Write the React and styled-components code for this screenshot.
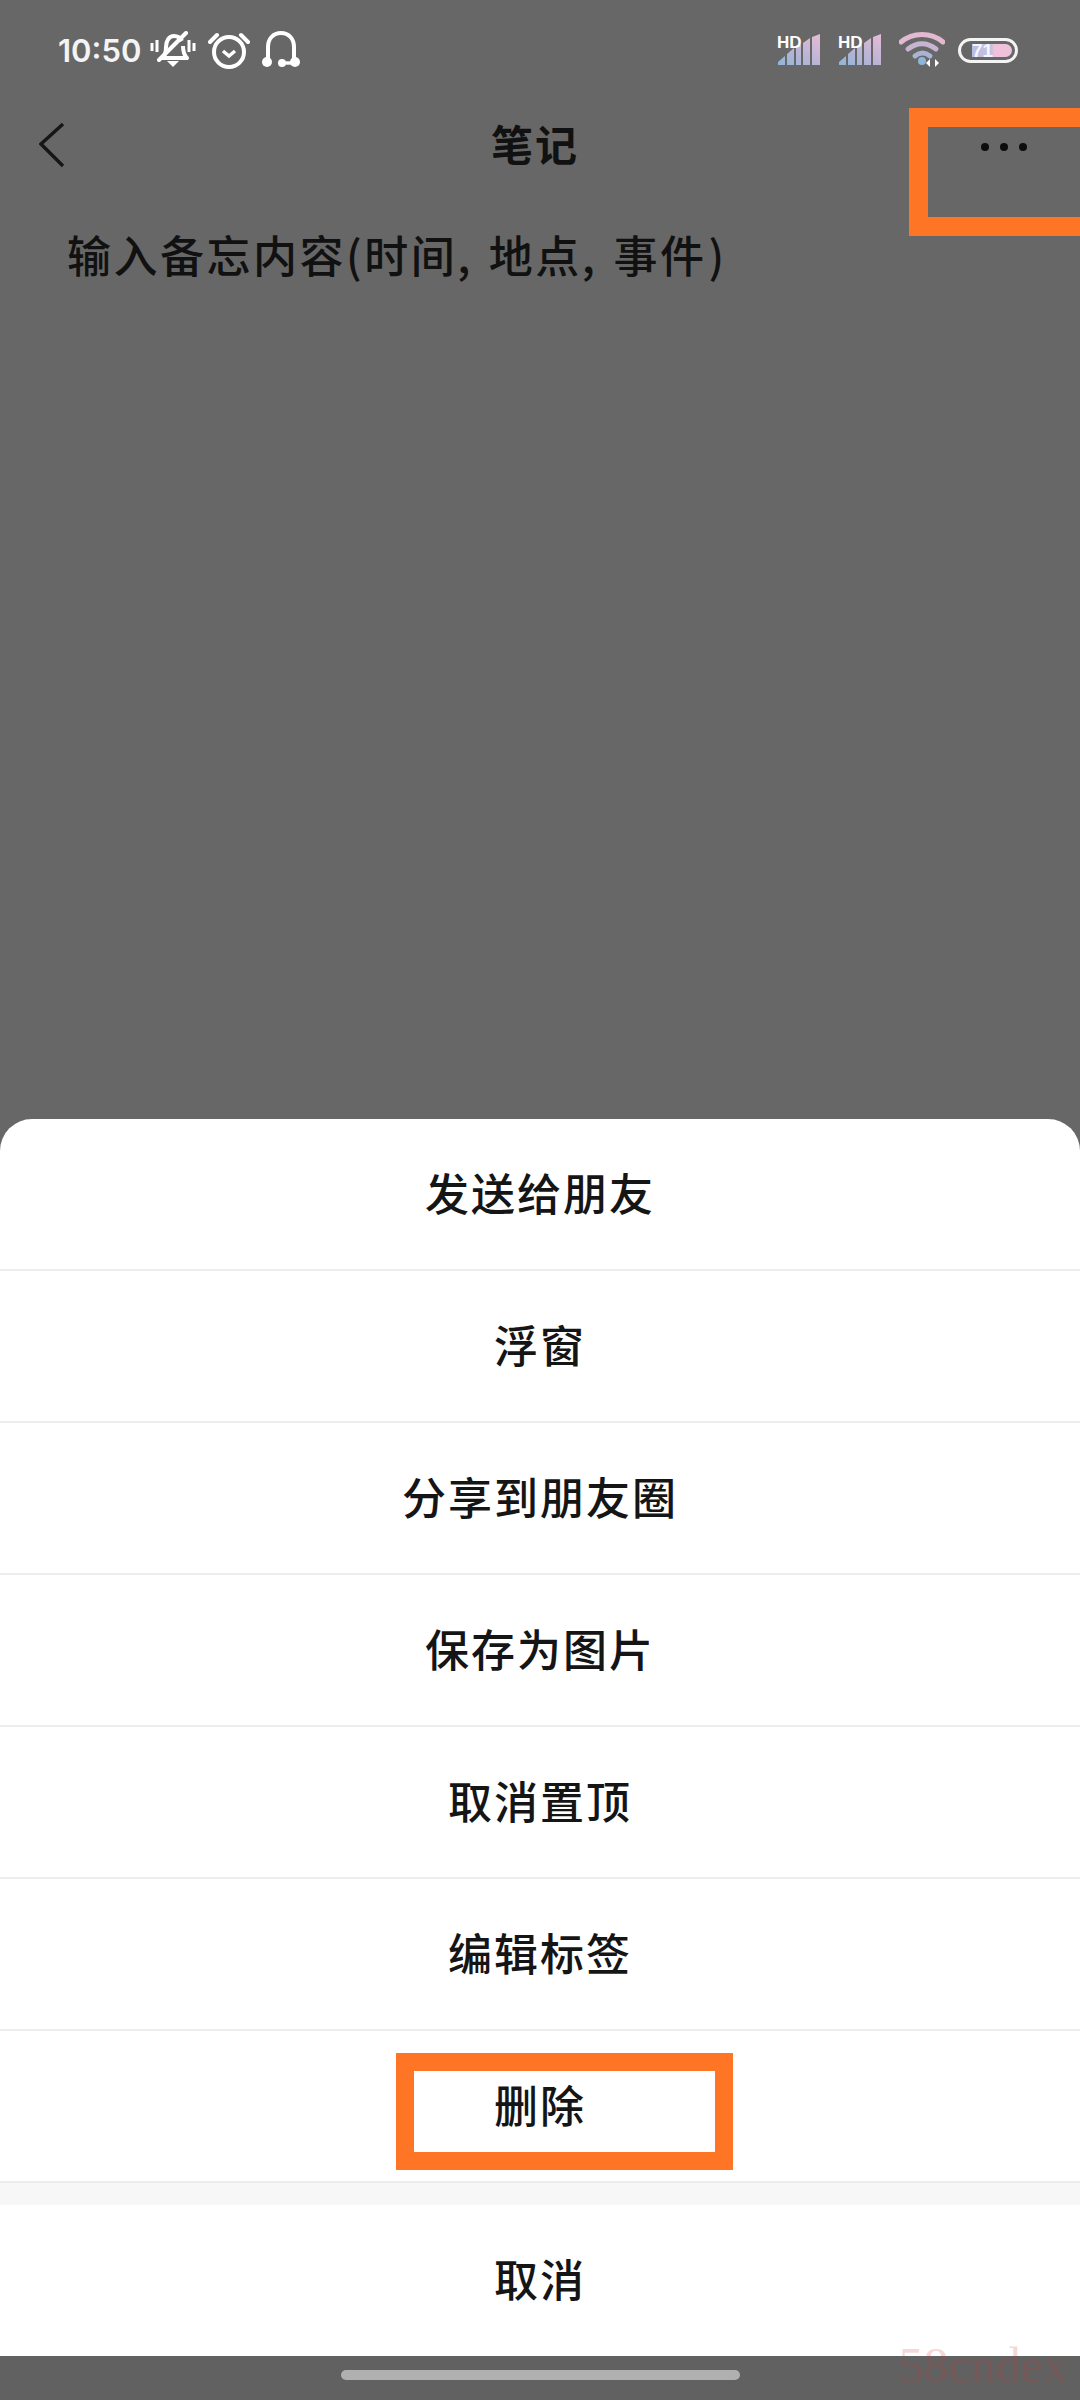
import React from 'react';
import styled, { createGlobalStyle } from 'styled-components';

const CJK = '"Noto Sans CJK SC", "Noto Sans", sans-serif';

const actions = ['发送给朋友', '浮窗', '分享到朋友圈', '保存为图片', '取消置顶', '编辑标签', '删除'];

const SignalIcon = ({ id }) => (
  <IconSvg width="44" height="32" viewBox="0 0 44 32">
    <defs>
      <linearGradient id={id} x1="0" x2="1" y1="1" y2="0">
        <stop offset="0" stopColor="#8fb6d8" />
        <stop offset="0.5" stopColor="#bdb4d6" />
        <stop offset="1" stopColor="#e6bcd6" />
      </linearGradient>
    </defs>
    <path
      fill={`url(#${id})`}
      d="M1 31v-3l7-6v9zM10 31V20l7-6v17zM19 31V14l5-4v21zM26 31V9l7-5v27zM35 31V3l8-3v31z"
    />
    <text x="0" y="14" fontFamily="Liberation Sans, sans-serif" fontWeight="700" fontSize="17" fill="#fff">HD</text>
  </IconSvg>
);

const App = () => (
  <Page>
    <GlobalStyle />
    <StatusBar>
      <Time>10:50</Time>
      <IconSvg width="46" height="38" viewBox="0 0 46 38" fill="none" stroke="#fff" strokeWidth="4">
        <path d="M2 12v8M7 9v12M39 9v12M44 12v8" strokeWidth="3" />
        <path d="M12 27c4-3 4-7 4-11 0-6 3-11 8-11 3 0 6 1 8 5M33 15c0 5 1 9 4 12H12" strokeLinejoin="round" />
        <path d="M9 29 36 2" strokeWidth="4" strokeLinecap="round" />
        <path d="M17 30h12l-6 6z" fill="#fff" stroke="none" />
      </IconSvg>
      <IconSvg width="42" height="38" viewBox="0 0 42 38" fill="none" stroke="#fff" strokeWidth="4">
        <circle cx="21" cy="21" r="15" />
        <path d="M15 20l6 5 6-5" strokeWidth="3.4" />
        <path d="M2 11 9 4M40 11l-7-7" strokeLinecap="round" />
      </IconSvg>
      <IconSvg width="38" height="38" viewBox="0 0 38 38" fill="none" stroke="#fff" strokeWidth="4">
        <path d="M6 30V16C6 8 11 2 19 2s13 6 13 14v14" />
        <circle cx="5" cy="31" r="5" fill="#fff" stroke="none" />
        <circle cx="33" cy="31" r="5" fill="#fff" stroke="none" />
        <circle cx="20" cy="32" r="4" fill="#fff" stroke="none" />
        <path d="M20 32h11" strokeWidth="3.4" />
      </IconSvg>
      <RightIcons>
        <SignalIcon id="sigA" />
        <SignalIcon id="sigB" />
        <IconSvg width="46" height="36" viewBox="0 0 46 36" fill="none" strokeLinecap="round">
          <path d="M2 10C14 0 32 0 44 10" stroke="#e3b9d2" strokeWidth="5" />
          <path d="M9 17c9-7 19-7 28 0" stroke="#c7b3d2" strokeWidth="5" />
          <path d="M16 24c5-4 10-4 15 0" stroke="#a9b4d4" strokeWidth="5" />
          <circle cx="23" cy="29" r="4" fill="#8fb6d8" />
          <path d="M31 27v8l-4-4zM36 35v-8l4 4z" fill="#fff" />
        </IconSvg>
        <Battery>
          <BatteryFill>71</BatteryFill>
        </Battery>
      </RightIcons>
    </StatusBar>

    <Header>
      <BackButton>
        <svg width="26" height="46" viewBox="0 0 26 46" fill="none" stroke="#161616" strokeWidth="3.4">
          <path d="M24 2 2 22l22 22" />
        </svg>
      </BackButton>
      <Title>笔记</Title>
      <MoreButton>
        <Dot />
        <Dot />
        <Dot />
      </MoreButton>
      <MoreHighlight />
    </Header>

    <NoteText>
      输入备忘内容(时间<Comma>,</Comma>地点<Comma>,</Comma>事件<CloseParen>)</CloseParen>
    </NoteText>

    <Spacer />

    <Sheet>
      {actions.map((label) => (
        <ActionRow key={label}>
          {label}
          {label === '删除' && <DeleteHighlight />}
        </ActionRow>
      ))}
      <SheetGap />
      <CancelRow>取消</CancelRow>
    </Sheet>

    <HomeStrip>
      <HomeBar />
    </HomeStrip>
    <Watermark>58cndex</Watermark>
  </Page>
);

const GlobalStyle = createGlobalStyle`
  html, body {
    margin: 0;
    padding: 0;
    background: #676767;
  }
`;

const Page = styled.div`
  position: relative;
  display: flex;
  flex-direction: column;
  width: 1080px;
  height: 2400px;
  overflow: hidden;
  background: #676767;
  font-family: ${CJK};
`;

const StatusBar = styled.div`
  display: flex;
  align-items: center;
  gap: 12px;
  height: 100px;
  padding: 0 62px 0 58px;
  box-sizing: border-box;
`;

const Time = styled.div`
  width: 80px;
  font-family: "Inter", "Liberation Sans", sans-serif;
  font-size: 31px;
  font-weight: 600;
  color: #f4f4f4;
`;

const IconSvg = styled.svg`
  display: block;
  flex: none;
`;

const RightIcons = styled.div`
  display: flex;
  align-items: center;
  gap: 17px;
  margin-left: auto;
`;

const Battery = styled.div`
  display: flex;
  justify-content: flex-end;
  width: 60px;
  height: 25px;
  margin-left: -4px;
  padding: 3px;
  box-sizing: border-box;
  border: 3px solid #f4f4f4;
  border-radius: 13px;
`;

const BatteryFill = styled.div`
  width: 40px;
  height: 100%;
  border-radius: 0 7px 7px 0;
  background: linear-gradient(90deg, #b9bde0 0%, #c9c0e0 50%, #efc1da 55%, #efc1da 100%);
  font-family: "Liberation Sans", sans-serif;
  font-size: 19px;
  font-weight: 700;
  line-height: 13px;
  color: #f4f6ff;
`;

const Header = styled.div`
  position: relative;
  display: grid;
  grid-template-columns: 1fr auto 1fr;
  align-items: center;
  height: 90px;
  padding-right: 10px;
`;

const BackButton = styled.div`
  display: flex;
  padding-left: 39px;
`;

const Title = styled.div`
  margin-top: -6px;
  font-size: 42px;
  font-weight: 700;
  letter-spacing: 2px;
  color: #111111;
`;

const MoreButton = styled.div`
  display: flex;
  justify-content: flex-end;
  gap: 11px;
  padding: 4px 43px 0 0;
`;

const Dot = styled.span`
  width: 8px;
  height: 8px;
  border-radius: 50%;
  background: #0d0d0d;
`;

const MoreHighlight = styled.div`
  position: absolute;
  top: 8px;
  left: 909px;
  width: 200px;
  height: 128px;
  box-sizing: border-box;
  border: 19px solid #ff7526;
`;

const NoteText = styled.div`
  margin-top: 40px;
  padding-left: 67px;
  font-size: 44px;
  font-weight: 500;
  line-height: 48px;
  letter-spacing: 2.5px;
  color: #111111;
`;

const Comma = styled.span`
  margin-right: 16px;
`;

const CloseParen = styled.span`
  margin-left: 2px;
`;

const Spacer = styled.div`
  flex: 1;
`;

const Sheet = styled.div`
  display: flex;
  flex-direction: column;
  border-radius: 32px 32px 0 0;
  overflow: hidden;
  background: #ffffff;
`;

const ActionRow = styled.div`
  position: relative;
  display: flex;
  align-items: center;
  justify-content: center;
  height: 152px;
  padding-bottom: 5px;
  box-sizing: border-box;
  border-bottom: 2px solid #ececec;
  font-size: 44px;
  font-weight: 500;
  letter-spacing: 2px;
  color: #151515;
`;

const DeleteHighlight = styled.div`
  position: absolute;
  top: 22px;
  left: 396px;
  width: 337px;
  height: 117px;
  box-sizing: border-box;
  border: 18px solid #ff7526;
`;

const SheetGap = styled.div`
  height: 22px;
  background: #f7f7f7;
`;

const CancelRow = styled(ActionRow)`
  height: 151px;
  border-bottom: none;
`;

const HomeStrip = styled.div`
  display: flex;
  justify-content: center;
  height: 44px;
  padding-top: 14px;
  box-sizing: border-box;
  background: #616161;
`;

const HomeBar = styled.div`
  width: 399px;
  height: 10px;
  border-radius: 5px;
  background: #b0b0b0;
`;

const Watermark = styled.div`
  position: absolute;
  right: 12px;
  bottom: 10px;
  font-family: "Liberation Serif", serif;
  font-size: 50px;
  line-height: 50px;
  color: rgba(200, 60, 60, 0.2);
`;

export default App;
